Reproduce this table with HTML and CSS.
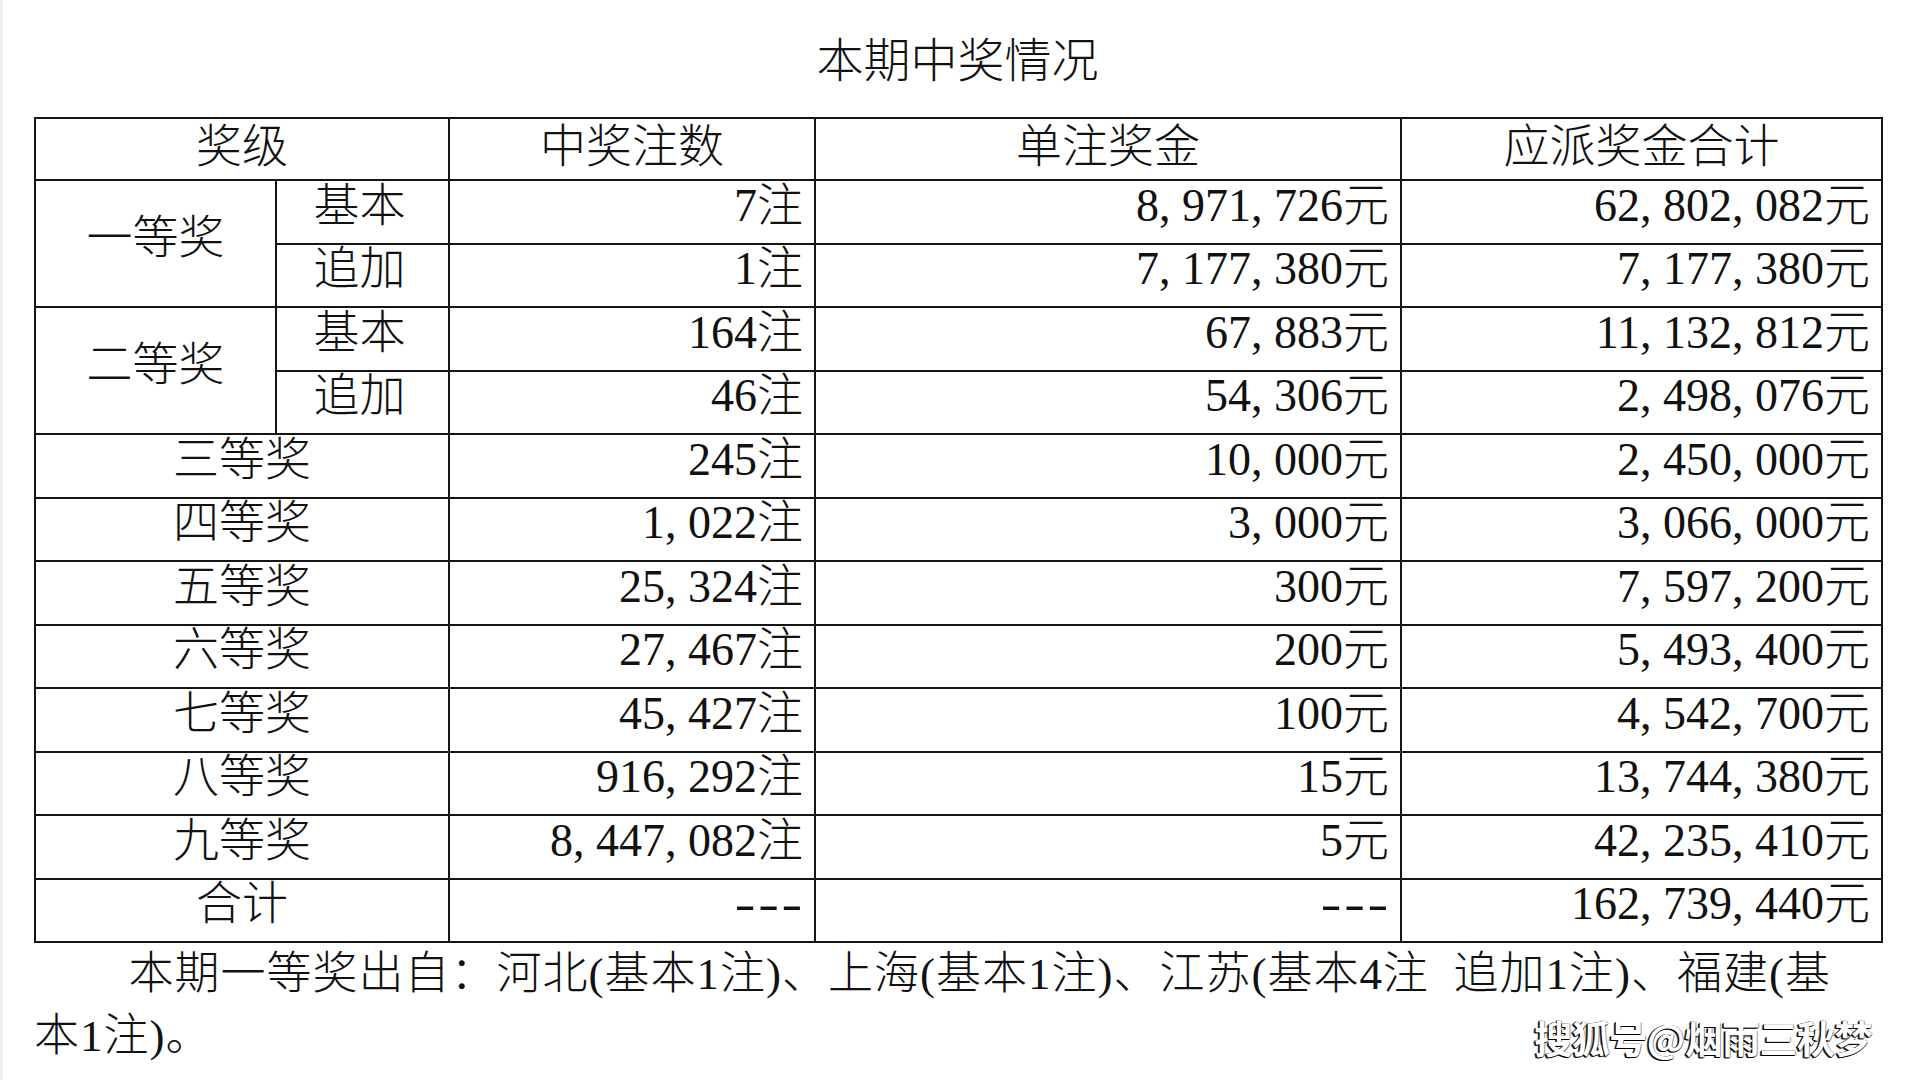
FILE: index.html
```html
<!DOCTYPE html>
<html lang="zh-CN">
<head>
<meta charset="utf-8">
<title>本期中奖情况</title>
<link rel="stylesheet" href="styles.css">
</head>
<body>
<div class="page">
  <h1 class="title">本期中奖情况</h1>
  <table class="prize">
    <colgroup>
      <col class="c1"><col class="c2"><col class="c3"><col class="c4"><col class="c5">
    </colgroup>
    <thead>
      <tr><th colspan="2">奖级</th><th>中奖注数</th><th>单注奖金</th><th>应派奖金合计</th></tr>
    </thead>
    <tbody>
      <tr><td rowspan="2" class="lvl">一等奖</td><td class="sub">基本</td><td class="num">7注</td><td class="num">8, 971, 726元</td><td class="num">62, 802, 082元</td></tr>
      <tr><td class="sub">追加</td><td class="num">1注</td><td class="num">7, 177, 380元</td><td class="num">7, 177, 380元</td></tr>
      <tr><td rowspan="2" class="lvl">二等奖</td><td class="sub">基本</td><td class="num">164注</td><td class="num">67, 883元</td><td class="num">11, 132, 812元</td></tr>
      <tr><td class="sub">追加</td><td class="num">46注</td><td class="num">54, 306元</td><td class="num">2, 498, 076元</td></tr>
      <tr><td colspan="2" class="lvl">三等奖</td><td class="num">245注</td><td class="num">10, 000元</td><td class="num">2, 450, 000元</td></tr>
      <tr><td colspan="2" class="lvl">四等奖</td><td class="num">1, 022注</td><td class="num">3, 000元</td><td class="num">3, 066, 000元</td></tr>
      <tr><td colspan="2" class="lvl">五等奖</td><td class="num">25, 324注</td><td class="num">300元</td><td class="num">7, 597, 200元</td></tr>
      <tr><td colspan="2" class="lvl">六等奖</td><td class="num">27, 467注</td><td class="num">200元</td><td class="num">5, 493, 400元</td></tr>
      <tr><td colspan="2" class="lvl">七等奖</td><td class="num">45, 427注</td><td class="num">100元</td><td class="num">4, 542, 700元</td></tr>
      <tr><td colspan="2" class="lvl">八等奖</td><td class="num">916, 292注</td><td class="num">15元</td><td class="num">13, 744, 380元</td></tr>
      <tr><td colspan="2" class="lvl">九等奖</td><td class="num">8, 447, 082注</td><td class="num">5元</td><td class="num">42, 235, 410元</td></tr>
      <tr><td colspan="2" class="lvl">合计</td><td class="num"><span class="dash">---</span></td><td class="num"><span class="dash">---</span></td><td class="num">162, 739, 440元</td></tr>
    </tbody>
  </table>
  <p class="note">本期一等奖出自：河北(基本1注)、上海(基本1注)、江苏(基本4注&nbsp; 追加1注)、福建(基<br>本1注)。</p>
  <div class="mark">搜狐号@烟雨三秋梦</div>
</div>
</body>
</html>
```
FILE: styles.css
```css
html, body {
  margin: 0;
  padding: 0;
  background: #ffffff;
}

body {
  width: 1920px;
  height: 1080px;
  overflow: hidden;
}

.page {
  position: relative;
  box-sizing: border-box;
  width: 1920px;
  height: 1080px;
  border-left: 3px solid #ededed;
  padding-left: 31px;
  color: #111111;
  font-family: "Liberation Serif", "Noto Sans CJK SC", serif;
  font-weight: 300;
}

.title {
  width: 1847px;
  margin: 0;
  padding-top: 38px;
  height: 46px;
  line-height: 46px;
  font-size: 47px;
  font-weight: 300;
  text-align: center;
  margin-bottom: 33px;
}

.prize {
  width: 1847px;
  table-layout: fixed;
  border-collapse: collapse;
  font-size: 46px;
  line-height: 46px;
}

.c1 { width: 241px; }
.c2 { width: 173px; }
.c3 { width: 366px; }
.c4 { width: 586px; }
.c5 { width: 481px; }

.prize th,
.prize td {
  border: 2px solid #151515;
  padding: 0 0 12px 0;
  vertical-align: middle;
  white-space: nowrap;
}

.prize thead tr { height: 62px; }
.prize tbody tr { height: 63.5px; }

.prize th {
  font-weight: 300;
  text-align: center;
  padding-bottom: 5px;
}

.prize .lvl,
.prize .sub {
  text-align: center;
}

.prize .sub { padding-right: 6px; }

.prize .num {
  text-align: right;
  padding-right: 11px;
}

.dash {
  display: inline-block;
  letter-spacing: 2px;
  margin-right: -2px;
  transform: scaleX(1.35);
  transform-origin: right center;
}

.note {
  width: 1847px;
  margin: 0;
  font-size: 45px;
  line-height: 62px;
  letter-spacing: 1px;
  text-indent: 2.1em;
}

.mark {
  position: absolute;
  right: 48px;
  top: 1014px;
  font-family: "Noto Sans CJK SC", "Noto Sans", sans-serif;
  font-size: 38px;
  line-height: 46px;
  font-weight: 700;
  color: #ffffff;
  letter-spacing: -0.5px;
  text-shadow: -1px 0 0 #000000, -1px 1px 0 #000000, 0 1px 0 #333333, -2px 1px 0 #555555, 1px 0 0 #aaaaaa;
}
```
